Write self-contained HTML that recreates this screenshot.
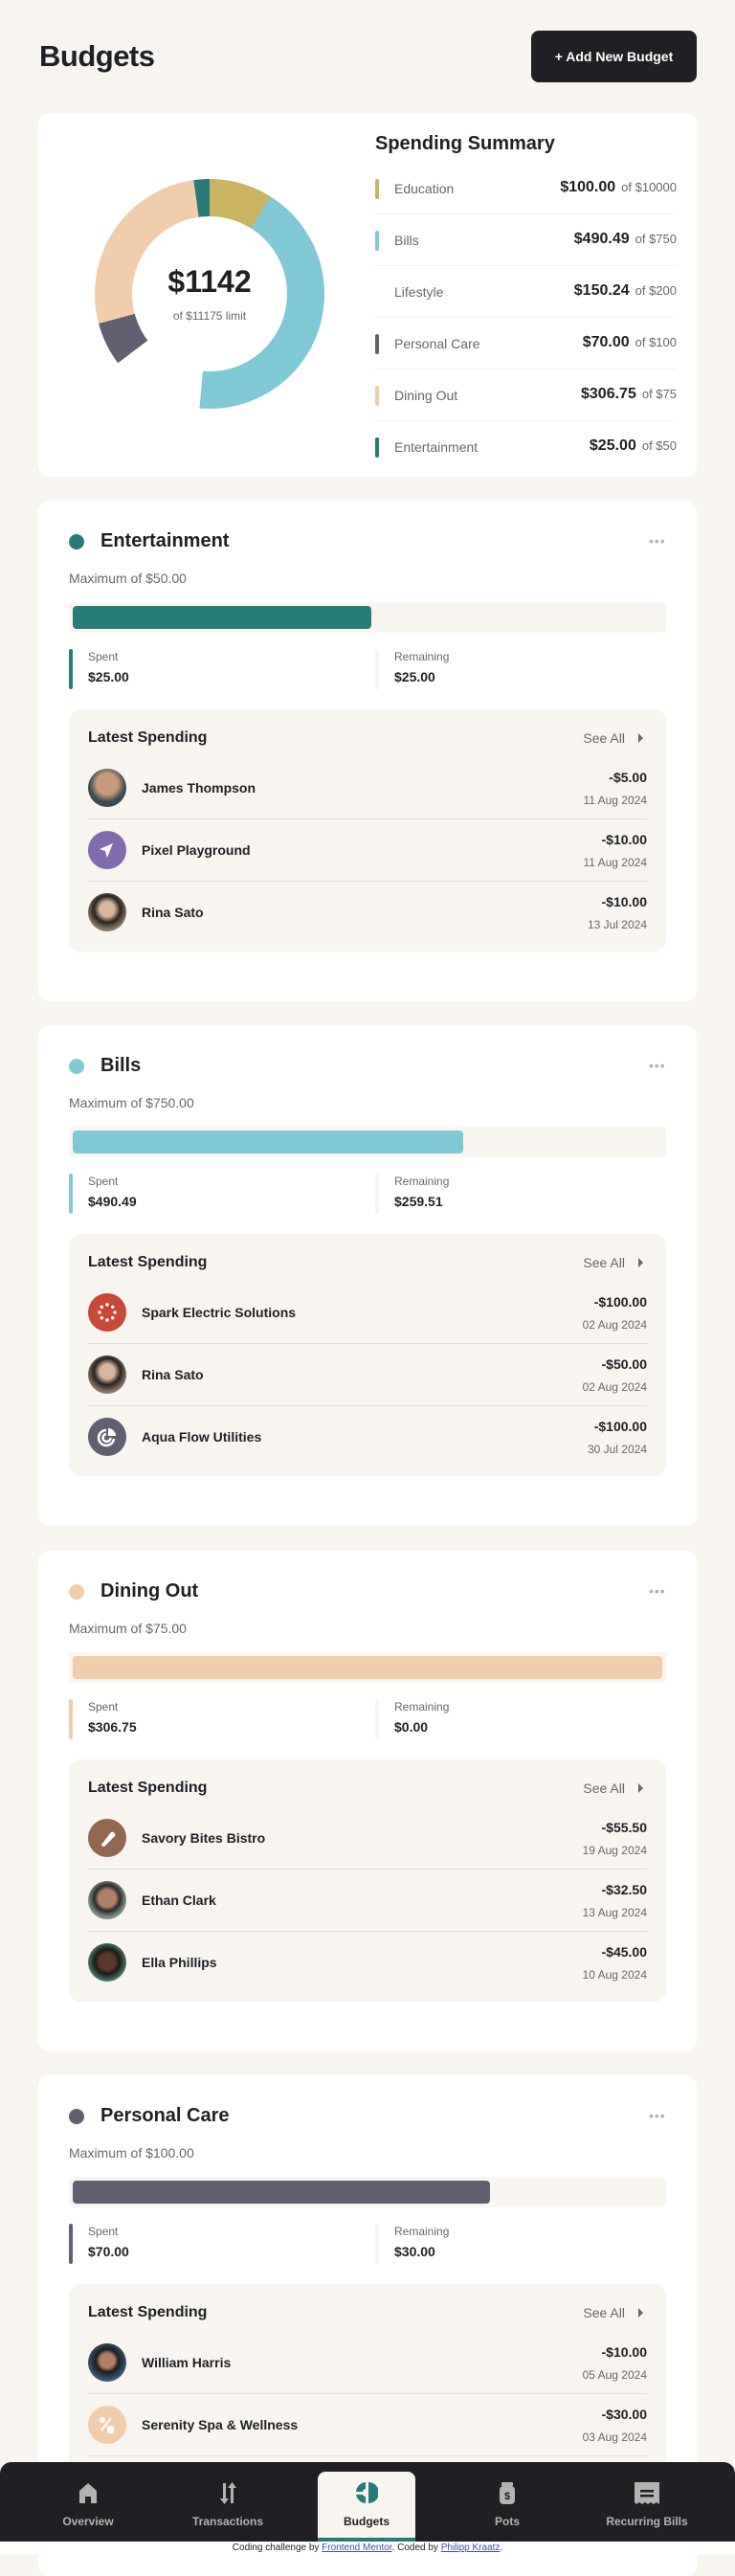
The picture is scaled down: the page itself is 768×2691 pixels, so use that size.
<!DOCTYPE html>
<html><head><meta charset="utf-8">
<style>
*{box-sizing:border-box;margin:0;padding:0}
body{width:768px;height:2668px;background:#F8F4F0;font-family:"Liberation Sans",sans-serif;color:#201F24;position:relative;overflow:hidden}
.abs{position:absolute}
h1{position:absolute;left:41px;top:41px;font-size:31px;font-weight:bold;letter-spacing:-0.5px}
.btn{position:absolute;left:555px;top:32px;width:173px;height:54px;background:#201F24;color:#fff;border-radius:8px;font-size:14px;font-weight:bold;display:flex;align-items:center;justify-content:center}
.card{position:absolute;left:40px;width:688px;background:#fff;border-radius:12px}
.sumrow{position:absolute;left:352px;width:315px;height:54px;border-bottom:1px solid #F2F2F2}
.sumrow .bar{position:absolute;left:0;top:17px;width:4px;height:21px;border-radius:2px}
.sumrow .lab{position:absolute;left:20px;top:19px;font-size:14px;color:#696868}
.sumrow .amt{position:absolute;right:0;top:17px;font-size:16px;font-weight:bold;white-space:nowrap}
.sumrow .amt span{font-size:13px;font-weight:normal;color:#696868;margin-left:6px}
.dot{position:absolute;left:32px;top:35px;width:16px;height:16px;border-radius:50%}
.ctitle{position:absolute;left:65px;top:31px;font-size:20px;font-weight:bold}
.more{position:absolute;left:638px;top:34px;font-size:14px;color:#B3B3B3;letter-spacing:1px}
.max{position:absolute;left:32px;top:73px;font-size:14px;color:#696868}
.track{position:absolute;left:32px;top:106px;width:624px;height:32px;background:#F8F4F0;border-radius:4px}
.fill{position:absolute;left:4px;top:4px;height:24px;border-radius:4px}
.stat{position:absolute;top:155px;height:42px;width:300px}
.stat .sb{position:absolute;left:0;top:0;width:4px;height:42px;border-radius:2px}
.stat .sl{position:absolute;left:20px;top:1px;font-size:12px;color:#696868}
.stat .sv{position:absolute;left:20px;top:21px;font-size:14px;font-weight:bold}
.latest{position:absolute;left:32px;top:218px;width:624px;height:253px;background:#F8F4F0;border-radius:12px}
.lt{position:absolute;left:20px;top:21px;font-size:16px;font-weight:bold}
.see{position:absolute;right:24px;top:22px;font-size:14px;color:#696868}
.see b{display:inline-block;margin-left:14px;width:0;height:0;border-left:5px solid #696868;border-top:5px solid transparent;border-bottom:5px solid transparent;vertical-align:0}
.tx{position:absolute;left:20px;width:584px;height:65px}
.tx.sep{border-bottom:1px solid #E0DDDA}
.av{position:absolute;left:0;top:12px;width:40px;height:40px;border-radius:50%;overflow:hidden}
.nm{position:absolute;left:56px;top:24px;font-size:14px;font-weight:bold}
.ta{position:absolute;right:0;top:13px;font-size:14px;font-weight:bold}
.td{position:absolute;right:0;top:38px;font-size:12px;color:#696868}
.nav{position:absolute;left:0;top:2572px;width:768px;height:83px;background:#201F24;border-radius:12px 12px 0 0}
.tab{position:absolute;top:0;width:102px;height:83px;text-align:center;color:#B3B3B3;font-size:12px;font-weight:bold}
.tab svg{position:absolute;left:39px;top:20px}
.tab .tl{position:absolute;left:0;width:100%;top:55px}
.foot{position:absolute;left:0;top:2655px;width:768px;height:13px;background:#fff;text-align:center;font-size:10px;line-height:13px;color:#201F24}
.foot a{color:#3e52a3;text-decoration:underline}
</style></head><body>
<h1>Budgets</h1>
<div class="btn">+ Add New Budget</div>

<div class="card" style="top:118px;height:380px">
  <div class="abs" style="left:59px;top:69px;width:240px;height:240px;border-radius:50%;background:conic-gradient(#CAB361 0deg 32deg,#82C9D7 32deg 185deg,#fff 185deg 233deg,#626070 233deg 255deg,#F2CDAC 255deg 352deg,#277C78 352deg 360deg)"></div>
  <div class="abs" style="left:98px;top:108px;width:162px;height:162px;border-radius:50%;background:#fff"></div>
  <div class="abs" style="left:98px;top:158px;width:162px;text-align:center;font-size:32px;font-weight:bold">$1142</div>
  <div class="abs" style="left:98px;top:205px;width:162px;text-align:center;font-size:12px;color:#696868">of $11175 limit</div>
  <div class="abs" style="left:352px;top:21px;font-size:20px;font-weight:bold">Spending Summary</div>
  <div class="sumrow" style="top:52px"><div class="bar" style="background:#CAB361"></div><div class="lab">Education</div><div class="amt">$100.00<span>of $10000</span></div></div>
  <div class="sumrow" style="top:106px"><div class="bar" style="background:#82C9D7"></div><div class="lab">Bills</div><div class="amt">$490.49<span>of $750</span></div></div>
  <div class="sumrow" style="top:160px"><div class="lab">Lifestyle</div><div class="amt">$150.24<span>of $200</span></div></div>
  <div class="sumrow" style="top:214px"><div class="bar" style="background:#626070"></div><div class="lab">Personal Care</div><div class="amt">$70.00<span>of $100</span></div></div>
  <div class="sumrow" style="top:268px"><div class="bar" style="background:#F2CDAC"></div><div class="lab">Dining Out</div><div class="amt">$306.75<span>of $75</span></div></div>
  <div class="sumrow" style="top:322px;border:none"><div class="bar" style="background:#277C78"></div><div class="lab">Entertainment</div><div class="amt">$25.00<span>of $50</span></div></div>
</div>

<!-- Entertainment -->
<div class="card" style="top:523px;height:523px">
  <div class="dot" style="background:#277C78"></div><div class="ctitle">Entertainment</div><div class="more">•••</div>
  <div class="max">Maximum of $50.00</div>
  <div class="track"><div class="fill" style="width:312px;background:#277C78"></div></div>
  <div class="stat" style="left:32px"><div class="sb" style="background:#277C78"></div><div class="sl">Spent</div><div class="sv">$25.00</div></div>
  <div class="stat" style="left:352px"><div class="sb" style="background:#F8F4F0"></div><div class="sl">Remaining</div><div class="sv">$25.00</div></div>
  <div class="latest"><div class="lt">Latest Spending</div><div class="see">See All<b></b></div>
    <div class="tx sep" style="top:50px"><div class="av" style="background:radial-gradient(circle at 50% 40%,#c89a7a 0 35%,#3b4a52 60%)"></div><div class="nm">James Thompson</div><div class="ta">-$5.00</div><div class="td">11 Aug 2024</div></div>
    <div class="tx sep" style="top:115px"><div class="av" style="background:#826CB0"><svg width="40" height="40"><path d="M26 13 L12 19 L18 21 L20 28 Z" fill="#fff"/></svg></div><div class="nm">Pixel Playground</div><div class="ta">-$10.00</div><div class="td">11 Aug 2024</div></div>
    <div class="tx" style="top:180px"><div class="av" style="background:radial-gradient(circle at 50% 42%,#d8b59c 0 25%,#2a2320 45%,#8a7a6a 70%)"></div><div class="nm">Rina Sato</div><div class="ta">-$10.00</div><div class="td">13 Jul 2024</div></div>
  </div>
</div>

<!-- Bills -->
<div class="card" style="top:1071px;height:523px">
  <div class="dot" style="background:#82C9D7"></div><div class="ctitle">Bills</div><div class="more">•••</div>
  <div class="max">Maximum of $750.00</div>
  <div class="track"><div class="fill" style="width:408px;background:#82C9D7"></div></div>
  <div class="stat" style="left:32px"><div class="sb" style="background:#82C9D7"></div><div class="sl">Spent</div><div class="sv">$490.49</div></div>
  <div class="stat" style="left:352px"><div class="sb" style="background:#F8F4F0"></div><div class="sl">Remaining</div><div class="sv">$259.51</div></div>
  <div class="latest"><div class="lt">Latest Spending</div><div class="see">See All<b></b></div>
    <div class="tx sep" style="top:50px"><div class="av" style="background:#C94736"><svg width="40" height="40" fill="#fff"><circle cx="20" cy="12" r="1.7"/><circle cx="25.7" cy="14.3" r="1.7"/><circle cx="28" cy="20" r="1.7"/><circle cx="25.7" cy="25.7" r="1.7"/><circle cx="20" cy="28" r="1.7"/><circle cx="14.3" cy="25.7" r="1.7"/><circle cx="12" cy="20" r="1.7"/><circle cx="14.3" cy="14.3" r="1.7"/></svg></div><div class="nm">Spark Electric Solutions</div><div class="ta">-$100.00</div><div class="td">02 Aug 2024</div></div>
    <div class="tx sep" style="top:115px"><div class="av" style="background:radial-gradient(circle at 50% 42%,#d8b59c 0 25%,#2a2320 45%,#8a7a6a 70%)"></div><div class="nm">Rina Sato</div><div class="ta">-$50.00</div><div class="td">02 Aug 2024</div></div>
    <div class="tx" style="top:180px"><div class="av" style="background:#626070"><svg width="40" height="40" fill="none" stroke="#fff" stroke-width="2.5"><path d="M27 22 A8 8 0 1 1 19 13"/><path d="M23.5 21 A4 4 0 1 1 19 17"/><path d="M21 11 L21 19 L29 19 A8 8 0 0 0 21 11Z" fill="#fff" stroke="none"/></svg></div><div class="nm">Aqua Flow Utilities</div><div class="ta">-$100.00</div><div class="td">30 Jul 2024</div></div>
  </div>
</div>

<!-- Dining Out -->
<div class="card" style="top:1620px;height:523px">
  <div class="dot" style="background:#F2CDAC"></div><div class="ctitle">Dining Out</div><div class="more">•••</div>
  <div class="max">Maximum of $75.00</div>
  <div class="track"><div class="fill" style="width:616px;background:#F2CDAC"></div></div>
  <div class="stat" style="left:32px"><div class="sb" style="background:#F2CDAC"></div><div class="sl">Spent</div><div class="sv">$306.75</div></div>
  <div class="stat" style="left:352px"><div class="sb" style="background:#F8F4F0"></div><div class="sl">Remaining</div><div class="sv">$0.00</div></div>
  <div class="latest"><div class="lt">Latest Spending</div><div class="see">See All<b></b></div>
    <div class="tx sep" style="top:50px"><div class="av" style="background:#93674F"><svg width="40" height="40"><path d="M14 27 L24 14 A3 3 0 0 1 28 18 L17 29 A2.5 2.5 0 0 1 14 27Z" fill="#fff"/></svg></div><div class="nm">Savory Bites Bistro</div><div class="ta">-$55.50</div><div class="td">19 Aug 2024</div></div>
    <div class="tx sep" style="top:115px"><div class="av" style="background:radial-gradient(circle at 50% 45%,#b08068 0 30%,#2b2b2b 45%,#7a8a80 65%)"></div><div class="nm">Ethan Clark</div><div class="ta">-$32.50</div><div class="td">13 Aug 2024</div></div>
    <div class="tx" style="top:180px"><div class="av" style="background:radial-gradient(circle at 50% 48%,#5a3a2a 0 28%,#1e1a18 45%,#4a7a6a 70%)"></div><div class="nm">Ella Phillips</div><div class="ta">-$45.00</div><div class="td">10 Aug 2024</div></div>
  </div>
</div>

<!-- Personal Care -->
<div class="card" style="top:2168px;height:523px">
  <div class="dot" style="background:#626070"></div><div class="ctitle">Personal Care</div><div class="more">•••</div>
  <div class="max">Maximum of $100.00</div>
  <div class="track"><div class="fill" style="width:436px;background:#626070"></div></div>
  <div class="stat" style="left:32px"><div class="sb" style="background:#626070"></div><div class="sl">Spent</div><div class="sv">$70.00</div></div>
  <div class="stat" style="left:352px"><div class="sb" style="background:#F8F4F0"></div><div class="sl">Remaining</div><div class="sv">$30.00</div></div>
  <div class="latest"><div class="lt">Latest Spending</div><div class="see">See All<b></b></div>
    <div class="tx sep" style="top:50px"><div class="av" style="background:radial-gradient(circle at 50% 45%,#b08068 0 25%,#1e1e1e 40%,#3a5a7a 70%)"></div><div class="nm">William Harris</div><div class="ta">-$10.00</div><div class="td">05 Aug 2024</div></div>
    <div class="tx sep" style="top:115px"><div class="av" style="background:#F2CDAC"><svg width="40" height="40" fill="#fff"><circle cx="15" cy="15" r="3"/><rect x="20" y="21" width="7" height="8" rx="2"/><path d="M14 26 L24 13" stroke="#fff" stroke-width="2"/></svg></div><div class="nm">Serenity Spa &amp; Wellness</div><div class="ta">-$30.00</div><div class="td">03 Aug 2024</div></div>
  </div>
</div>

<div class="nav">
  <div class="tab" style="left:41px"><svg width="24" height="24"><path d="M12 2 L21 10 V23 H15 V16 H9 V23 H3 V10 Z" fill="#B3B3B3"/></svg><div class="tl">Overview</div></div>
  <div class="tab" style="left:187px"><svg width="24" height="24" fill="#B3B3B3"><path d="M7 2 H10 V18 H13 L8.5 24 L4 18 H7Z"/><path d="M15 7 H12 L16.5 1 L21 7 H18 V23 H15Z"/></svg><div class="tl">Transactions</div></div>
  <div class="tab" style="left:332px;top:10px;height:73px;background:#F8F4F0;border-radius:8px 8px 0 0;color:#201F24;border-bottom:4px solid #277C78"><svg width="24" height="24" style="top:10px"><path d="M14 1 A11 11 0 0 1 14 23 Z" fill="#277C78"/><path d="M11 1 A11 11 0 0 0 1 11 H8 A3.5 3.5 0 0 1 11 8Z" fill="#277C78"/><path d="M1 14 A11 11 0 0 0 11 23 V16 A3.5 3.5 0 0 1 8 14Z" fill="#277C78"/></svg><div class="tl" style="top:45px">Budgets</div></div>
  <div class="tab" style="left:479px"><svg width="24" height="24"><rect x="6" y="1" width="12" height="4" rx="1" fill="#B3B3B3"/><rect x="4" y="5" width="16" height="19" rx="4" fill="#B3B3B3"/><text x="12" y="19" font-size="11" font-weight="bold" text-anchor="middle" fill="#201F24" font-family="Liberation Sans">$</text></svg><div class="tl">Pots</div></div>
  <div class="tab" style="left:625px"><svg width="28" height="24" style="left:37px"><path d="M1 1 H27 V24 L24 22 L21 24 L18 22 L15 24 L12 22 L9 24 L6 22 L3 24 L1 22Z" fill="#B3B3B3"/><rect x="7" y="9" width="14" height="2.5" fill="#201F24"/><rect x="7" y="14" width="14" height="2.5" fill="#201F24"/></svg><div class="tl">Recurring Bills</div></div>
</div>
<div class="foot">Coding challenge by <a href="#">Frontend Mentor</a>. Coded by <a href="#">Philipp Kraatz</a>.</div>
</body></html>
